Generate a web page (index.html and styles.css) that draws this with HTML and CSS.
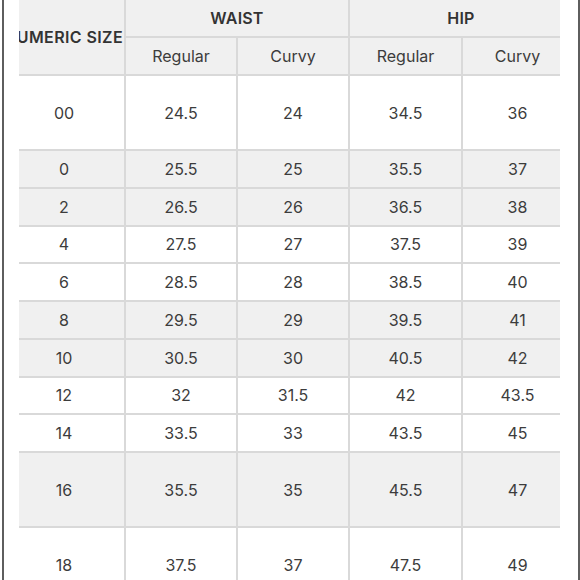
FILE: index.html
```html
<!DOCTYPE html>
<html lang="en">
<head>
<meta charset="utf-8">
<title>Size chart</title>
<link rel="stylesheet" href="styles.css">
</head>
<body>
<div class="frame">
  <div class="chart">
    <div class="cell head size-head first"><span>NUMERIC SIZE</span></div>
    <div class="cell head group waist">WAIST</div>
    <div class="cell head group hip last">HIP</div>
    <div class="cell head sub">Regular</div>
    <div class="cell head sub">Curvy</div>
    <div class="cell head sub">Regular</div>
    <div class="cell head sub last">Curvy</div>

    <div class="cell tall first">00</div><div class="cell tall">24.5</div><div class="cell tall">24</div><div class="cell tall">34.5</div><div class="cell tall last">36</div>
    <div class="cell alt first">0</div><div class="cell alt">25.5</div><div class="cell alt">25</div><div class="cell alt">35.5</div><div class="cell alt last">37</div>
    <div class="cell alt first">2</div><div class="cell alt">26.5</div><div class="cell alt">26</div><div class="cell alt">36.5</div><div class="cell alt last">38</div>
    <div class="cell first">4</div><div class="cell">27.5</div><div class="cell">27</div><div class="cell">37.5</div><div class="cell last">39</div>
    <div class="cell first">6</div><div class="cell">28.5</div><div class="cell">28</div><div class="cell">38.5</div><div class="cell last">40</div>
    <div class="cell alt first">8</div><div class="cell alt">29.5</div><div class="cell alt">29</div><div class="cell alt">39.5</div><div class="cell alt last">41</div>
    <div class="cell alt first">10</div><div class="cell alt">30.5</div><div class="cell alt">30</div><div class="cell alt">40.5</div><div class="cell alt last">42</div>
    <div class="cell first">12</div><div class="cell">32</div><div class="cell">31.5</div><div class="cell">42</div><div class="cell last">43.5</div>
    <div class="cell first">14</div><div class="cell">33.5</div><div class="cell">33</div><div class="cell">43.5</div><div class="cell last">45</div>
    <div class="cell alt tall first">16</div><div class="cell alt tall">35.5</div><div class="cell alt tall">35</div><div class="cell alt tall">45.5</div><div class="cell alt tall last">47</div>
    <div class="cell tall first">18</div><div class="cell tall">37.5</div><div class="cell tall">37</div><div class="cell tall">47.5</div><div class="cell tall last">49</div>
  </div>
</div>
</body>
</html>
```

FILE: styles.css
```css
html, body {
  margin: 0;
  padding: 0;
  background: #ffffff;
}

body {
  font-family: Inter, "Noto Sans", sans-serif;
  color: #3c3c3c;
}

.frame {
  box-sizing: border-box;
  width: 578px;
  height: 580px;
  margin-left: 2px;
  border-left: 2px solid #5e5e5e;
  border-right: 2px solid #5e5e5e;
  padding-left: 15px;
  overflow: hidden;
  background: #ffffff;
}

.chart {
  display: grid;
  width: 541px;
  grid-template-columns: 105px 110px 110px 111px 97px;
  grid-template-rows: 36px 36px 73px repeat(8, 35.75px) 73px 73px;
  gap: 2px;
  background: #d9d9d9;
}

.cell {
  display: flex;
  align-items: center;
  justify-content: center;
  background: #ffffff;
  font-size: 16px;
  white-space: nowrap;
  overflow: hidden;
}

.cell.first {
  padding-right: 15px;
}

.cell.last {
  padding-left: 12px;
}

.cell.alt,
.cell.head {
  background: #f0f0f0;
}

.head.group {
  font-weight: 600;
  font-size: 16px;
  color: #333333;
  letter-spacing: 0.2px;
}

.waist {
  grid-column: 2 / span 2;
}

.hip {
  grid-column: 4 / span 2;
}

.size-head {
  grid-row: 1 / span 2;
  justify-content: flex-end;
  font-weight: 600;
  font-size: 16px;
  letter-spacing: 0.4px;
  color: #333333;
}

.cell.size-head.first {
  padding-right: 1px;
}

.head.sub {
  font-size: 16px;
}
```
